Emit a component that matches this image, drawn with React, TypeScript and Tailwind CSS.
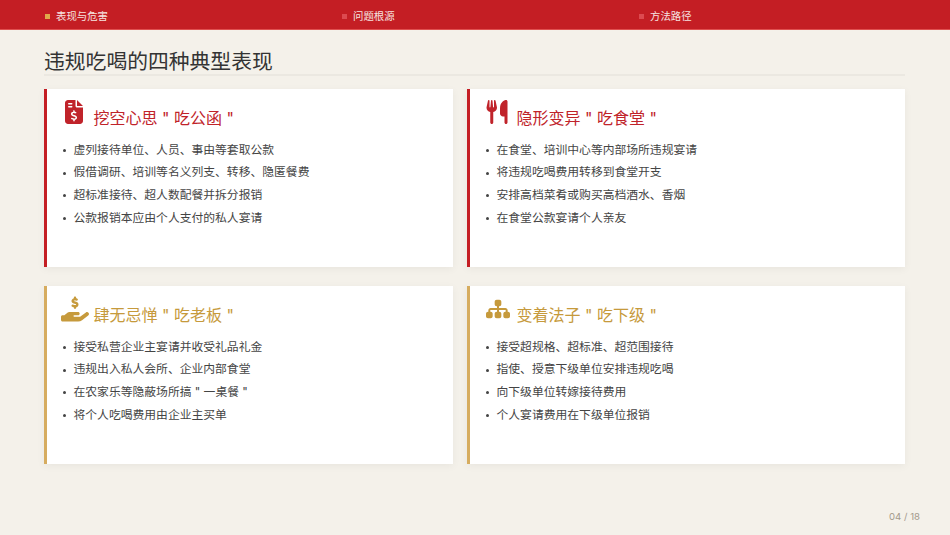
import React from "react";
import { FaFileInvoiceDollar, FaUtensils, FaHandHoldingDollar, FaSitemap } from "react-icons/fa6";

const cards = [
  { c: "red", icon: <FaFileInvoiceDollar className="w-[18px] h-[24px] mb-[1px] mr-[2px]" />, title: '挖空心思 " 吃公函 "', items: ["虚列接待单位、人员、事由等套取公款", "假借调研、培训等名义列支、转移、隐匿餐费", "超标准接待、超人数配餐并拆分报销", "公款报销本应由个人支付的私人宴请"] },
  { c: "red", icon: <FaUtensils className="w-[22px] h-[24px] mb-[1px] mr-[2px]" />, title: '隐形变异 " 吃食堂 "', items: ["在食堂、培训中心等内部场所违规宴请", "将违规吃喝费用转移到食堂开支", "安排高档菜肴或购买高档酒水、香烟", "在食堂公款宴请个人亲友"] },
  { c: "gold", icon: <FaHandHoldingDollar className="w-[28px] h-[26px]" />, title: '肆无忌惮 " 吃老板 "', items: ["接受私营企业主宴请并收受礼品礼金", "违规出入私人会所、企业内部食堂", '在农家乐等隐蔽场所搞 " 一桌餐 "', "将个人吃喝费用由企业主买单"] },
  { c: "gold", icon: <FaSitemap className="w-[24px] h-[22px] mb-[2px]" />, title: '变着法子 " 吃下级 "', items: ["接受超规格、超标准、超范围接待", "指使、授意下级单位安排违规吃喝", "向下级单位转嫁接待费用", "个人宴请费用在下级单位报销"] },
];

function Card({ card }: { card: (typeof cards)[number] }) {
  const red = card.c === "red";
  return (
    <div className={`bg-white h-[178px] border-l-[3px] pl-[14px] pt-[8px] shadow-[0_2px_8px_rgba(0,0,0,0.05)] ${red ? "border-[#c41e24]" : "border-[#d6ac5f]"}`}>
      <div className={`flex items-end gap-[4.5px] h-[28px] ${red ? "text-[#c0232a]" : "text-[#c69a3c]"}`}>
        <span className="w-[28px] flex justify-center">{card.icon}</span>
        <span className="text-[16px] leading-[24px] mb-[-4.5px]">{card.title}</span>
      </div>
      <ul className="mt-[14px] pl-[2px]">
        {card.items.map((t) => (
          <li key={t} className="flex items-center h-[22.7px] text-[11.8px] text-[#444444]">
            <span className="w-[3px] h-[3px] rounded-full bg-[#444444] mr-[7.5px]" />
            {t}
          </li>
        ))}
      </ul>
    </div>
  );
}

export default function App() {
  return (
    <div className="w-[950px] h-[535px] overflow-hidden bg-[#f4f1ea] flex flex-col font-['Inter','Noto_Sans_CJK_SC',sans-serif]">
      <div className="h-[30px] shrink-0 bg-[#c41e24] border-b border-[#e05050] pl-[45px] pt-[4px] flex items-center">
        {[["表现与危害", "bg-[#e0a84a]"], ["问题根源", "bg-[#dc4a50]"], ["方法路径", "bg-[#dc4a50]"]].map(([t, c]) => (
          <div key={t} className="w-[297px] flex items-center text-[10.4px] text-[#f6e3e0]">
            <span className={`w-[5px] h-[5px] mr-[6px] mt-[1px] ${c}`} />
            {t}
          </div>
        ))}
      </div>
      <div className="pl-[44px] w-[905px] box-content">
        <div className="w-[861px] h-[46px] border-b-2 border-[#ebe8e1] pt-[17.5px]">
          <h1 className="text-[20.8px] leading-[28px] text-[#333333] font-normal">违规吃喝的四种典型表现</h1>
        </div>
        <div className="mt-[13px] grid grid-cols-[409px_438px] gap-x-[14px] gap-y-[19px]">
          {cards.map((c) => <Card key={c.title} card={c} />)}
        </div>
      </div>
      <div className="mt-auto mb-[11px] pr-[30px] text-right text-[9.6px] text-[#a39a8c]">04 / 18</div>
    </div>
  );
}
